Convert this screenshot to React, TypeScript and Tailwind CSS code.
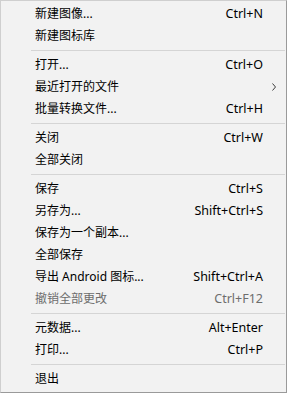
import React from "react";

type Item =
  | { type: "sep" }
  | { type: "item"; label: string; shortcut?: string; disabled?: boolean; submenu?: boolean };

const items: Item[] = [
  { type: "item", label: "新建图像...", shortcut: "Ctrl+N" },
  { type: "item", label: "新建图标库" },
  { type: "sep" },
  { type: "item", label: "打开...", shortcut: "Ctrl+O" },
  { type: "item", label: "最近打开的文件", submenu: true },
  { type: "item", label: "批量转换文件...", shortcut: "Ctrl+H" },
  { type: "sep" },
  { type: "item", label: "关闭", shortcut: "Ctrl+W" },
  { type: "item", label: "全部关闭" },
  { type: "sep" },
  { type: "item", label: "保存", shortcut: "Ctrl+S" },
  { type: "item", label: "另存为...", shortcut: "Shift+Ctrl+S" },
  { type: "item", label: "保存为一个副本..." },
  { type: "item", label: "全部保存" },
  { type: "item", label: "导出 Android 图标...", shortcut: "Shift+Ctrl+A" },
  { type: "item", label: "撤销全部更改", shortcut: "Ctrl+F12", disabled: true },
  { type: "sep" },
  { type: "item", label: "元数据...", shortcut: "Alt+Enter" },
  { type: "item", label: "打印...", shortcut: "Ctrl+P" },
  { type: "sep" },
  { type: "item", label: "退出" },
];

const Chevron = () => (
  <svg width="6" height="8" viewBox="0 0 6 8" fill="none">
    <path d="M1.5 0.5 L4.5 4 L1.5 7.5" stroke="#3c3c3c" strokeWidth="1" />
  </svg>
);

export default function App() {
  return (
    <div
      className="w-[287px] h-[393px] bg-[#f2f2f2] border border-t-[#cfcfcf] border-l-[#cfcfcf] border-r-[#9a9a9a] border-b-[#9a9a9a] pt-[2px] text-[12px] text-black"
      style={{ fontFamily: '"Noto Sans", "Noto Sans CJK SC", sans-serif' }}
    >
      {items.map((it, i) =>
        it.type === "sep" ? (
          <div key={i} className="h-[7px] pt-[3px] pl-[30px] pr-[1px]">
            <div className="h-px bg-[#d5d5d5]" />
          </div>
        ) : (
          <div
            key={i}
            className={`flex items-center h-[22px] leading-[22px] pl-[34px] pr-[9px] ${
              it.disabled ? "text-[#6d6d6d]" : ""
            }`}
          >
            <div className="flex-1 whitespace-nowrap">{it.label}</div>
            {it.shortcut && <div className="whitespace-nowrap text-[12.5px]">{it.shortcut}</div>}
            <div className="w-[14px] flex justify-end">{it.submenu && <Chevron />}</div>
          </div>
        )
      )}
    </div>
  );
}
